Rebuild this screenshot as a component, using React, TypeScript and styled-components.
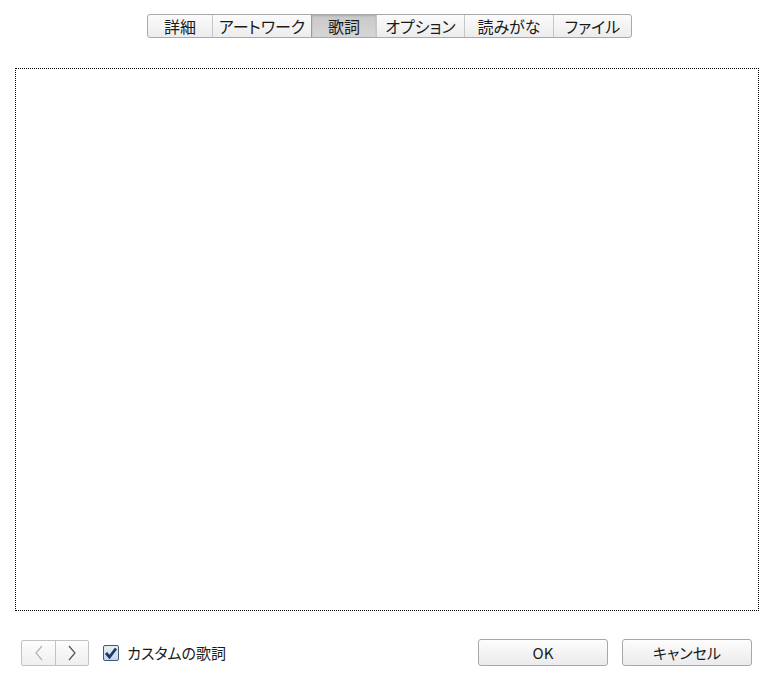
import React, { useState } from "react";
import styled, { createGlobalStyle, css } from "styled-components";

const GlobalStyle = createGlobalStyle`
  html, body {
    margin: 0;
    padding: 0;
    background: #ffffff;
  }
  * {
    box-sizing: border-box;
  }
`;

const tabs = ["詳細", "アートワーク", "歌詞", "オプション", "読みがな", "ファイル"];
const tabWidths = [64, 99, 65, 88, 89, 78];

const App = () => {
  const [active, setActive] = useState(2);
  const [custom, setCustom] = useState(true);

  return (
    <>
      <GlobalStyle />
      <Window>
        <TabBarRow>
          <TabBar>
            {tabs.map((t, i) => (
              <Tab
                key={t}
                $active={i === active}
                $first={i === 0}
                style={{ width: tabWidths[i] }}
                onClick={() => setActive(i)}
              >
                {t}
              </Tab>
            ))}
          </TabBar>
        </TabBarRow>
        <LyricsArea />
        <Footer>
          <NavGroup>
            <NavButton>
              <svg width="10" height="16" viewBox="0 0 10 16">
                <path d="M8 1 L2 8 L8 15" fill="none" stroke="#b4b4b4" strokeWidth="1.2" />
              </svg>
            </NavButton>
            <NavButton>
              <svg width="10" height="16" viewBox="0 0 10 16">
                <path d="M2 1 L8 8 L2 15" fill="none" stroke="#555" strokeWidth="1.2" />
              </svg>
            </NavButton>
          </NavGroup>
          <CheckLabel onClick={() => setCustom(!custom)}>
            <CheckBox>
              {custom && (
                <svg width="14" height="14" viewBox="0 0 14 14">
                  <path d="M2 7 L5.5 11 L12 2.5" fill="none" stroke="#1c3a66" strokeWidth="2.8" />
                </svg>
              )}
            </CheckBox>
            カスタムの歌詞
          </CheckLabel>
          <Spacer />
          <Button>OK</Button>
          <Button>キャンセル</Button>
        </Footer>
      </Window>
    </>
  );
};

const Window = styled.div`
  width: 775px;
  height: 687px;
  display: flex;
  flex-direction: column;
  font-family: "Noto Sans CJK JP", "Noto Sans", sans-serif;
  font-feature-settings: "palt";
  color: #1a1a1a;
`;

const TabBarRow = styled.div`
  display: flex;
  justify-content: flex-start;
  padding: 14px 0 0 147px;
  height: 68px;
`;

const TabBar = styled.div`
  display: flex;
  height: 24px;
  border: 1px solid #a9a9a9;
  border-radius: 3px;
  overflow: hidden;
  background: linear-gradient(#fbfbfb, #ececec);
`;

const Tab = styled.div<{ $active: boolean; $first: boolean }>`
  display: flex;
  align-items: center;
  justify-content: center;
  font-size: 16px;
  line-height: 1;
  border-left: 1px solid #c6c6c6;
  cursor: default;
  ${(p) => p.$first && css`border-left: none;`}
  ${(p) =>
    p.$active &&
    css`
      background: linear-gradient(#c9c9c9, #d6d6d6);
      border-left: 1px solid #9d9d9d;
      box-shadow: inset 0 1px 2px rgba(0, 0, 0, 0.15);
    `}
`;

const LyricsArea = styled.div`
  margin: 0 16px 0 15px;
  height: 543px;
  border: 1px dotted #000;
`;

const Footer = styled.div`
  display: flex;
  align-items: center;
  padding: 28px 23px 0 21px;
  gap: 14px;
`;

const NavGroup = styled.div`
  display: flex;
  height: 26px;
  border: 1px solid #c2c2c2;
  border-radius: 2px;
  background: linear-gradient(#fdfdfd, #efefef);
`;

const NavButton = styled.div`
  width: 33px;
  display: flex;
  align-items: center;
  justify-content: center;
  & + & {
    border-left: 1px solid #c2c2c2;
  }
`;

const CheckLabel = styled.label`
  display: flex;
  align-items: center;
  gap: 8px;
  font-size: 15px;
  cursor: default;
  user-select: none;
`;

const CheckBox = styled.span`
  width: 16px;
  height: 16px;
  border: 1px solid #3c5a86;
  border-radius: 2px;
  background: linear-gradient(#e8eef6, #c8d4e4);
  display: flex;
  align-items: center;
  justify-content: center;
`;

const Spacer = styled.div`
  flex: 1;
`;

const Button = styled.button`
  width: 130px;
  height: 27px;
  font-family: inherit;
  font-size: 15px;
  font-feature-settings: "palt";
  color: #1a1a1a;
  border: 1px solid #a8a8a8;
  border-radius: 3px;
  background: linear-gradient(#fdfdfd, #ebebeb);
  padding: 0;
`;

export default App;
